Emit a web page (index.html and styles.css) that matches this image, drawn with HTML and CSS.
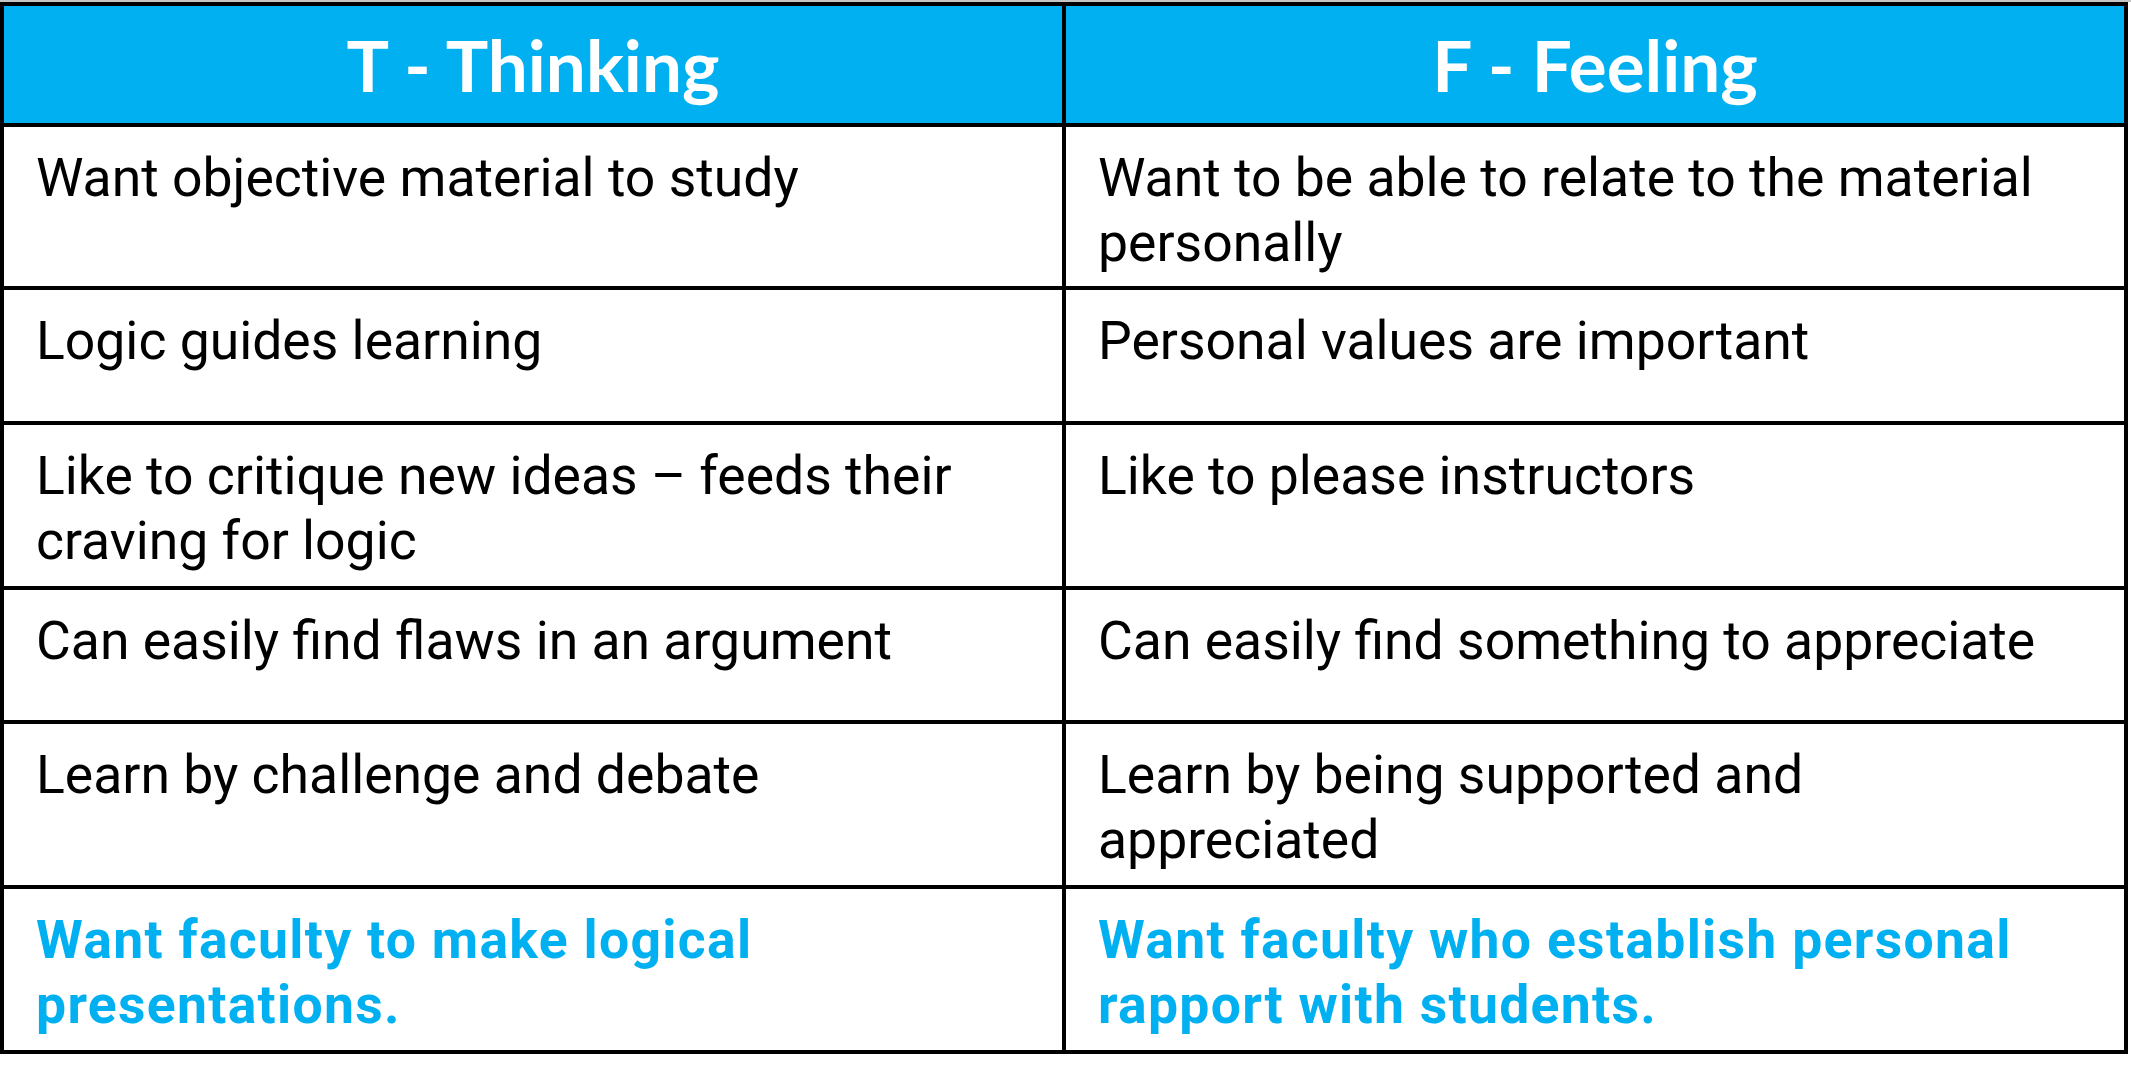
FILE: index.html
```html
<!DOCTYPE html>
<html lang="en">
<head>
<meta charset="utf-8">
<title>T - Thinking vs F - Feeling</title>
<link rel="stylesheet" href="styles.css">
</head>
<body>
<div class="page">
  <div class="grid">
    <div class="cell head">T - Thinking</div>
    <div class="cell head">F - Feeling</div>

    <div class="cell">Want objective material to study</div>
    <div class="cell">Want to be able to relate to the material personally</div>

    <div class="cell">Logic guides learning</div>
    <div class="cell">Personal values are important</div>

    <div class="cell">Like to critique new ideas – feeds their craving for logic</div>
    <div class="cell">Like to please instructors</div>

    <div class="cell">Can easily find flaws in an argument</div>
    <div class="cell">Can easily find something to appreciate</div>

    <div class="cell">Learn by challenge and debate</div>
    <div class="cell">Learn by being supported and appreciated</div>

    <div class="cell key">Want faculty to make logical presentations.</div>
    <div class="cell key">Want faculty who establish personal rapport with students.</div>
  </div>
</div>
</body>
</html>
```

FILE: styles.css
```css
html, body {
  margin: 0;
  padding: 0;
  background: #ffffff;
}

.page {
  width: 2131px;
  height: 1071px;
  border-top: 2px solid #c4c4c4;
  box-sizing: border-box;
}

.grid {
  width: 2128px;
  display: grid;
  grid-template-columns: 1058px 1058px;
  grid-template-rows: 117px 159px 131px 161px 130px 161px 161px;
  gap: 4px;
  padding: 4px;
  box-sizing: border-box;
  background: #000000;
}

.cell {
  background: #ffffff;
  padding: 18px 50px 0 32px;
  font-family: Roboto, "Liberation Sans", sans-serif;
  font-size: 53.5px;
  line-height: 65px;
  color: #000000;
}

.head {
  background: #00b0f0;
  color: #ffffff;
  font-family: Lato, "Liberation Sans", sans-serif;
  font-weight: 700;
  font-size: 71px;
  line-height: 80px;
  padding: 0;
  display: flex;
  align-items: center;
  justify-content: center;
}

.key {
  color: #00b0f0;
  font-weight: 700;
  letter-spacing: 1.3px;
}
```
